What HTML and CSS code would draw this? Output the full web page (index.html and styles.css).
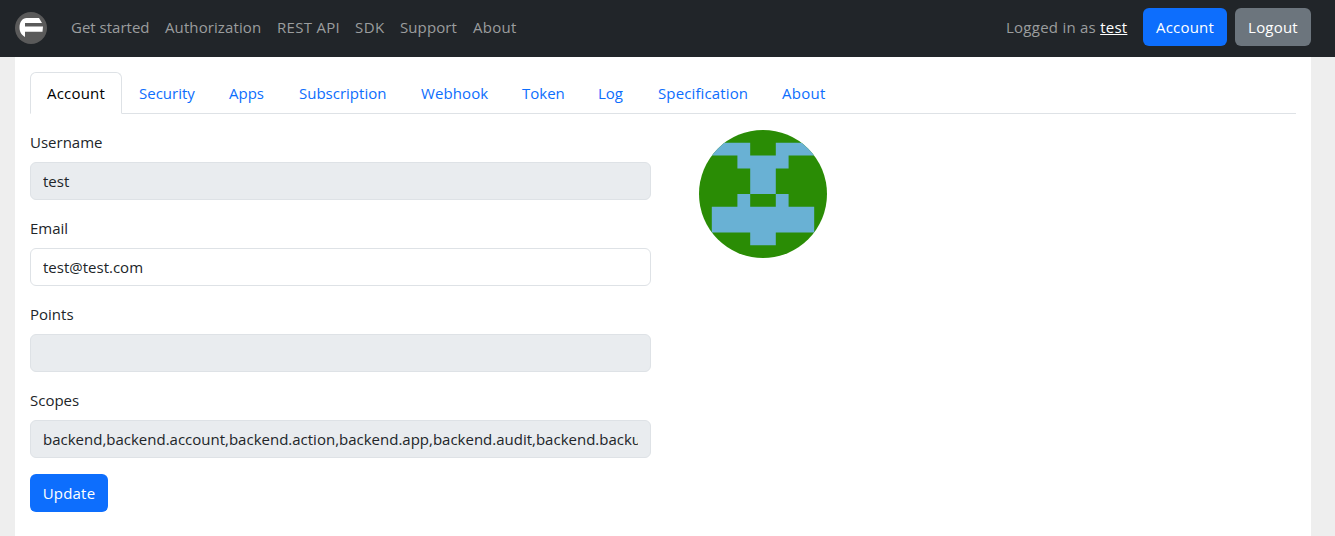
FILE: index.html
```html
<!DOCTYPE html>
<html lang="en">
<head>
<meta charset="utf-8">
<title>Account</title>
<link rel="stylesheet" href="styles.css">
</head>
<body>
<header class="navbar">
  <a class="brand" href="#" aria-label="Home">
    <svg width="32" height="32" viewBox="0 0 32 32">
      <circle cx="16" cy="16" r="16" fill="#5a5a5a"/>
      <path d="M10 25C6 22.500 4.500 19.500 4.500 15.500C4.500 10 7.500 6 11.500 6H24L27 11H10V14.500H28L27.500 19.800H10Z" fill="#fff"/>
    </svg>
  </a>
  <nav class="nav-links">
    <a class="nav-start" href="#">Get started</a>
    <a class="nav-auth" href="#">Authorization</a>
    <a class="nav-rest" href="#">REST API</a>
    <a class="nav-sdk" href="#">SDK</a>
    <a class="nav-support" href="#">Support</a>
    <a class="nav-about" href="#">About</a>
  </nav>
  <span class="login-state">Logged in as <a href="#">test</a></span>
  <button class="btn btn-primary btn-account">Account</button>
  <button class="btn btn-secondary btn-logout">Logout</button>
</header>
<main class="content">
  <nav class="tabs">
    <a class="tab tab-account active" href="#">Account</a>
    <a class="tab tab-security" href="#">Security</a>
    <a class="tab tab-apps" href="#">Apps</a>
    <a class="tab tab-subscription" href="#">Subscription</a>
    <a class="tab tab-webhook" href="#">Webhook</a>
    <a class="tab tab-token" href="#">Token</a>
    <a class="tab tab-log" href="#">Log</a>
    <a class="tab tab-specification" href="#">Specification</a>
    <a class="tab tab-about" href="#">About</a>
  </nav>
  <div class="row">
    <form class="account-form">
      <div class="field">
        <label for="username">Username</label>
        <input id="username" value="test" disabled>
      </div>
      <div class="field">
        <label for="email">Email</label>
        <input id="email" value="test@test.com">
      </div>
      <div class="field">
        <label for="points">Points</label>
        <input id="points" disabled>
      </div>
      <div class="field">
        <label for="scopes">Scopes</label>
        <input id="scopes" value="backend,backend.account,backend.action,backend.app,backend.audit,backend.backup,backend.category" disabled>
      </div>
      <button class="btn btn-primary btn-update" type="button">Update</button>
    </form>
    <div class="avatar">
      <svg width="128" height="128" viewBox="0 0 10 10">
        <clipPath id="round"><circle cx="5" cy="5" r="5"/></clipPath>
        <g clip-path="url(#round)">
          <path d="M0 0H10V10H0Z" fill="#2a8c05"/>
          <path d="M1 1H4V2H6V1H9V2H7V3H6V5H7V6H9V8H6V9H4V8H1V6H3V5H4V3H3V2H1ZM4 5V6H6V5Z" fill="#69b1d4" fill-rule="evenodd"/>
        </g>
      </svg>
    </div>
  </div>
</main>
</body>
</html>
```
FILE: styles.css
```css
* { box-sizing: border-box; }

body {
  margin: 0;
  height: 536px;
  overflow: hidden;
  display: flex;
  flex-direction: column;
  background: #eee;
  color: #212529;
  font: 15px/24px "Segoe UI", "Open Sans", "Noto Sans", sans-serif;
}

a { text-decoration: none; white-space: nowrap; }

.navbar {
  flex: none;
  display: flex;
  align-items: center;
  height: 57px;
  padding: 0 24px 3px 15px;
  background: #212529;
  color: #9b9d9e;
}

.brand { display: flex; margin: 1px 16px 0 0; }

.nav-links { display: flex; margin-right: auto; }
.nav-links a { padding: 0 8px; color: #9b9d9e; }
.nav-start { width: 94px; }
.nav-auth { width: 112px; letter-spacing: 0.1px; }
.nav-rest { width: 78px; letter-spacing: 0.3px; }
.nav-sdk { width: 45px; letter-spacing: 0.5px; }
.nav-support { width: 73px; letter-spacing: 0.1px; }
.nav-about { width: 60px; letter-spacing: 0.3px; }

.login-state {
  width: 121px;
  margin-right: 16px;
  letter-spacing: 0.25px;
  white-space: nowrap;
}
.login-state a { color: #fff; text-decoration: underline; }

.btn {
  height: 38px;
  padding: 0;
  border: 0;
  border-radius: 6px;
  color: #fff;
  font: inherit;
  letter-spacing: 0.2px;
}
.btn-primary { background: #0d6efd; }
.btn-secondary { background: #6c757d; }
.btn-account { width: 84px; margin-right: 8px; }
.btn-logout { width: 76px; }
.btn-update { width: 78px; }

.content {
  flex: 1;
  margin: 0 24px 0 15px;
  padding: 15px;
  background: #fff;
}

.tabs {
  display: flex;
  height: 42px;
  border-bottom: 1px solid #dee2e6;
}
.tab {
  height: 42px;
  padding: 8px 16px;
  border: 1px solid transparent;
  border-radius: 6px 6px 0 0;
  color: #0d6efd;
}
.tab.active {
  border-color: #dee2e6 #dee2e6 #fff;
  background: #fff;
  color: #000;
}
.tab-account { width: 92px; letter-spacing: 0.2px; }
.tab-security { width: 90px; }
.tab-apps { width: 70px; }
.tab-subscription { width: 122px; }
.tab-webhook { width: 101px; letter-spacing: 0.1px; }
.tab-token { width: 76px; }
.tab-log { width: 60px; }
.tab-specification { width: 124px; letter-spacing: 0.13px; }
.tab-about { width: 78px; letter-spacing: 0.3px; }

.row { display: flex; gap: 48px; padding-top: 16px; }

.account-form { width: 621px; }
.field { margin-bottom: 16px; }
.field label { display: block; margin-bottom: 8px; }
.field input {
  display: block;
  width: 100%;
  height: 38px;
  padding: 6px 12px;
  border: 1px solid #dee2e6;
  border-radius: 6px;
  background: #fff;
  color: #212529;
  font: inherit;
}
.field input:disabled { background: #e9ecef; }

.avatar svg { display: block; }
```
